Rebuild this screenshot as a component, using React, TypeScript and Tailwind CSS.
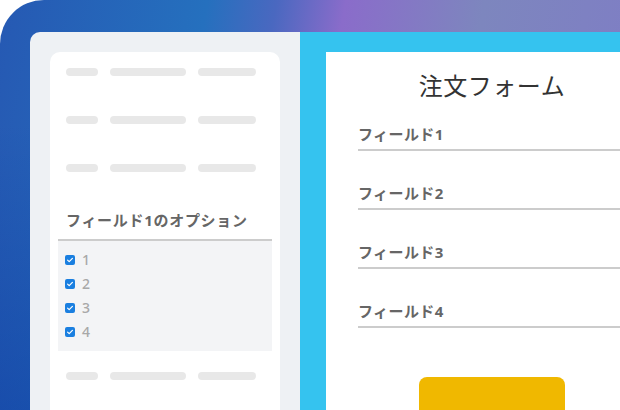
import React from 'react';

const font = { fontFamily: '"Noto Sans", "Noto Sans CJK JP", sans-serif' };

function SkeletonRow() {
  return (
    <div className="flex h-[8px] items-center gap-[12px] pl-[16px]">
      <div className="h-[8px] w-[32px] rounded-full bg-[#e8e8e8]" />
      <div className="h-[8px] w-[76px] rounded-full bg-[#e8e8e8]" />
      <div className="h-[8px] w-[58px] rounded-full bg-[#e8e8e8]" />
    </div>
  );
}

function CheckItem({ label }: { label: string }) {
  return (
    <div className="flex h-[24px] items-center gap-[7px] pl-[7px]">
      <div className="flex h-[10px] w-[10px] items-center justify-center rounded-[2px] bg-[#1a7fe0]">
        <svg width="8" height="8" viewBox="0 0 8 8" fill="none">
          <path d="M1.6 4.1 3.2 5.6 6.4 2.4" stroke="white" strokeWidth="1.2" strokeLinecap="round" strokeLinejoin="round" />
        </svg>
      </div>
      <span className="text-[14px] font-medium leading-none text-[#a8a8a8]">{label}</span>
    </div>
  );
}

function Field({ label }: { label: string }) {
  return (
    <div className="border-b-2 border-[#cccccc] pb-[5px]">
      <p className="text-[15px] font-bold leading-[20px] tracking-[0.4px] text-[#666666]">{label}</p>
    </div>
  );
}

export default function App() {
  return (
    <div className="h-[410px] w-[620px] overflow-hidden bg-white" style={font}>
      <div className="h-full w-full rounded-tl-[44px] bg-[linear-gradient(180deg,rgba(0,0,0,0)_30%,rgba(0,40,150,0.35)_100%),linear-gradient(100deg,#2659b3_0%,#2570be_30%,#4a68c0_40%,#8a6cca_50%,#7d86be_70%,#7f7cc6_100%)] pl-[30px] pt-[32px]">
        <div className="flex h-full overflow-hidden rounded-tl-[10px]">
          {/* left panel */}
          <div className="flex w-[270px] shrink-0 flex-col bg-[#eef1f4] px-[20px] pt-[20px]">
            <div className="flex-1 rounded-t-[10px] bg-white pt-[16px]">
              <div className="flex flex-col gap-[40px]">
                <SkeletonRow />
                <SkeletonRow />
                <SkeletonRow />
              </div>
              <div className="mt-[38px] px-[8px]">
                <div className="border-b-2 border-[#cccccc] pb-[9px] pl-[8px]">
                  <p className="text-[15px] font-bold leading-[20px] tracking-[0.7px] text-[#666666]">
                    フィールド1のオプション
                  </p>
                </div>
                <div className="flex flex-col bg-[#f3f4f6] pb-[7px] pt-[7px]">
                  <CheckItem label="1" />
                  <CheckItem label="2" />
                  <CheckItem label="3" />
                  <CheckItem label="4" />
                </div>
              </div>
              <div className="mt-[21px]">
                <SkeletonRow />
              </div>
            </div>
          </div>

          {/* right panel */}
          <div className="flex min-w-0 flex-1 flex-col overflow-hidden bg-[#35c3ef] pl-[26px] pt-[20px]">
            <div className="flex w-[332px] flex-1 shrink-0 flex-col bg-white px-[32px] pt-[19px]">
              <h1 className="text-center text-[24px] font-normal leading-[30px] tracking-[0.5px] text-[#333333]">
                注文フォーム
              </h1>
              <div className="mt-[23px] flex flex-col gap-[32px]">
                <Field label="フィールド1" />
                <Field label="フィールド2" />
                <Field label="フィールド3" />
                <Field label="フィールド4" />
              </div>
              <div className="mt-[49px] flex justify-center">
                <button className="h-[40px] w-[146px] rounded-t-[8px] bg-[#f0b800]" />
              </div>
            </div>
          </div>
        </div>
      </div>
    </div>
  );
}
